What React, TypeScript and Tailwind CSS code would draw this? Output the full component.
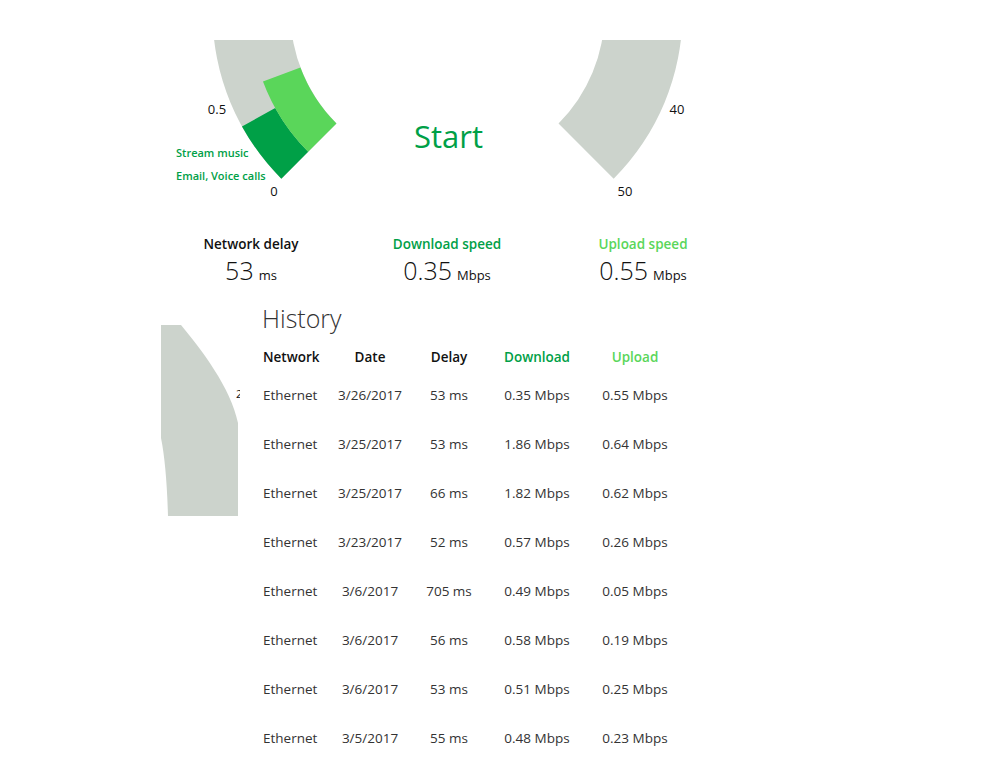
import React from "react";

const C = { cx: 447.5, cy: 12.5 };
function pt(r: number, deg: number) {
  const a = (deg * Math.PI) / 180;
  return `${(C.cx + r * Math.cos(a)).toFixed(2)} ${(C.cy + r * Math.sin(a)).toFixed(2)}`;
}
function band(r1: number, r2: number, a1: number, a2: number) {
  const large = a2 - a1 > 180 ? 1 : 0;
  return `M ${pt(r2, a1)} A ${r2} ${r2} 0 ${large} 1 ${pt(r2, a2)} L ${pt(r1, a2)} A ${r1} ${r1} 0 ${large} 0 ${pt(r1, a1)} Z`;
}

const rows = [
  ["Ethernet", "3/26/2017", "53 ms", "0.35 Mbps", "0.55 Mbps"],
  ["Ethernet", "3/25/2017", "53 ms", "1.86 Mbps", "0.64 Mbps"],
  ["Ethernet", "3/25/2017", "66 ms", "1.82 Mbps", "0.62 Mbps"],
  ["Ethernet", "3/23/2017", "52 ms", "0.57 Mbps", "0.26 Mbps"],
  ["Ethernet", "3/6/2017", "705 ms", "0.49 Mbps", "0.05 Mbps"],
  ["Ethernet", "3/6/2017", "56 ms", "0.58 Mbps", "0.19 Mbps"],
  ["Ethernet", "3/6/2017", "53 ms", "0.51 Mbps", "0.25 Mbps"],
  ["Ethernet", "3/5/2017", "55 ms", "0.48 Mbps", "0.23 Mbps"],
];

const GRAY = "#ccd3cc";
const DARK = "#00a047";
const LIGHT = "#5ad65a";
const font = "'Open Sans', 'Noto Sans', sans-serif";

function Gauge() {
  return (
    <div className="relative h-[200px]">
      <svg width="999" height="200" className="block" style={{ fontFamily: font }}>
        <defs>
          <clipPath id="topclip">
            <rect x="0" y="40" width="999" height="160" />
          </clipPath>
        </defs>
        <g clipPath="url(#topclip)">
          <path d={band(157, 235, 135, 405)} fill={GRAY} />
          <path d={band(197, 235, 135, 151)} fill={DARK} />
          <path d={band(157, 197, 135, 159.5)} fill={LIGHT} />
        </g>
        <text x="217" y="114" fontSize="13" fill="#111" textAnchor="middle">0.5</text>
        <text x="274" y="196" fontSize="13" fill="#111" textAnchor="middle">0</text>
        <text x="677" y="114" fontSize="13" fill="#111" textAnchor="middle">40</text>
        <text x="625" y="196" fontSize="13" fill="#111" textAnchor="middle">50</text>
        <text x="176" y="156.5" fontSize="11" fontWeight="600" fill={DARK}>Stream music</text>
        <text x="176" y="179.5" fontSize="11" fontWeight="600" fill={DARK}>Email, Voice calls</text>
      </svg>
      <button className="absolute left-[380px] top-[116px] w-[137px] text-center text-[31px] leading-[40px] text-[#00a047]">
        Start
      </button>
    </div>
  );
}

function Stat({ label, value, unit, color }: { label: string; value: string; unit: string; color: string }) {
  return (
    <div className="w-[196px] flex flex-col items-center">
      <div className={`text-[13.5px] leading-[20px] font-semibold ${color}`}>{label}</div>
      <div className="mt-[1px] flex items-baseline gap-[5px] text-[#111]">
        <span className="text-[25px] leading-[30px] font-light">{value}</span>
        <span className="text-[13px] leading-[30px]">{unit}</span>
      </div>
    </div>
  );
}

function LowerGauge() {
  return (
    <div className="mt-[20px] ml-[161px] w-[79px] h-[191px] overflow-hidden shrink-0">
      <svg width="79" height="191" viewBox="161 325 79 191" className="block" style={{ fontFamily: font }}>
        <path
          d="M161 325 L181 325 C201 349 231 388 238 423 L238 516 L168 516 Q166.5 465 161 438 Z"
          fill={GRAY}
        />
        <text x="236" y="398" fontSize="11" fill="#111">2</text>
      </svg>
    </div>
  );
}

export default function App() {
  return (
    <div className="w-[999px] h-[760px] overflow-hidden bg-white" style={{ fontFamily: font }}>
      <Gauge />
      <div className="mt-[34px] ml-[153px] flex">
        <Stat label="Network delay" value="53" unit="ms" color="text-[#111]" />
        <Stat label="Download speed" value="0.35" unit="Mbps" color="text-[#00a047]" />
        <Stat label="Upload speed" value="0.55" unit="Mbps" color="text-[#5ad65a]" />
      </div>
      <div className="mt-[15px] flex items-start">
        <LowerGauge />
        <div className="ml-[22px]">
          <div className="text-[25px] leading-[30px] font-light text-[#333] -mt-[2px]">History</div>
          <div className="mt-[14px] grid grid-cols-[56px_104px_54px_122px_74px] h-[20px] items-center text-[13.5px] font-semibold leading-[20px]">
            <div className="text-left pl-[1px] text-[#111]">Network</div>
            <div className="text-center text-[#111]">Date</div>
            <div className="text-center text-[#111]">Delay</div>
            <div className="text-center text-[#00a047]">Download</div>
            <div className="text-center text-[#5ad65a]">Upload</div>
          </div>
          <div className="mt-[3px]">
            {rows.map((r, i) => (
              <div
                key={i}
                className="grid grid-cols-[56px_104px_54px_122px_74px] h-[49px] items-center text-[13.5px] leading-[20px] text-[#333] whitespace-nowrap"
              >
                <div className="text-left pl-[1px]">{r[0]}</div>
                <div className="text-center">{r[1]}</div>
                <div className="text-center">{r[2]}</div>
                <div className="text-center">{r[3]}</div>
                <div className="text-center">{r[4]}</div>
              </div>
            ))}
          </div>
        </div>
      </div>
    </div>
  );
}
